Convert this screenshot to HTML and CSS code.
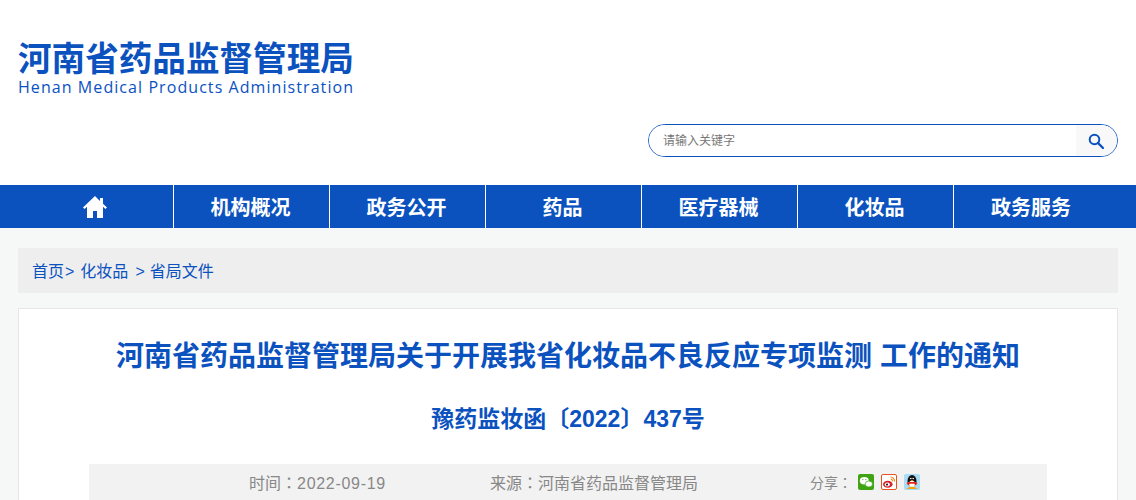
FILE: index.html
```html
<!DOCTYPE html>
<html lang="zh-CN">
  <head>
    <meta charset="UTF-8" />
    <title>河南省药品监督管理局</title>
    <link rel="stylesheet" href="styles.css">
  </head>
  <body>
    <header class="top">
      <div class="logo">
        <div class="logo-cn">河南省药品监督管理局</div>
        <div class="logo-en">Henan Medical Products Administration</div>
      </div>
      <form class="search">
        <input class="search-input" type="text" placeholder="请输入关键字" />
        <span class="search-btn">
          <svg width="16" height="16" viewBox="0 0 16 16">
            <circle cx="6.5" cy="6.5" r="4.8" fill="none" stroke="#0b52bf" stroke-width="2" />
            <path d="M10 10l5 5" stroke="#0b52bf" stroke-width="2.4" stroke-linecap="round" />
          </svg>
        </span>
      </form>
    </header>
    <nav class="nav">
      <ul class="nav-list">
        <li class="nav-item">
          <svg width="26" height="24" viewBox="0 0 26 24">
            <path d="M13 1L1 12.5l1.6 1.500L5 11.800V23h6v-7h4v7h6V11.800l2.400 2.200 1.600-1.500L21 8.700V3h-3v2.900z" fill="#fff" />
          </svg>
        </li>
        <li class="nav-item">机构概况</li>
        <li class="nav-item">政务公开</li>
        <li class="nav-item">药品</li>
        <li class="nav-item">医疗器械</li>
        <li class="nav-item">化妆品</li>
        <li class="nav-item">政务服务</li>
      </ul>
    </nav>
    <div class="crumb">
      <a>首页</a><span class="sep">&gt;</span><a>化妆品</a><span class="sep2">&gt;</span><a>省局文件</a>
    </div>
    <main class="card">
      <h1 class="title">河南省药品监督管理局关于开展我省化妆品不良反应专项监测 工作的通知</h1>
      <h2 class="doc-no">豫药监妆函〔2022〕437号</h2>
      <div class="meta">
        <span class="meta-time">时间<span class="colon" lang="zh-TW">：</span><span class="date">2022-09-19</span></span>
        <span class="meta-src">来源<span class="colon" lang="zh-TW">：</span>河南省药品监督管理局</span>
        <div class="share">
          <span class="share-label">分享<span class="colon" lang="zh-TW">：</span></span>
          <svg class="share-icon" width="16" height="16" viewBox="0 0 16 16">
            <rect width="16" height="16" rx="2" fill="#3fa312" />
            <ellipse cx="6.300" cy="6.700" rx="4.500" ry="3.700" fill="#fff" />
            <ellipse cx="10.800" cy="10" rx="3.700" ry="3" fill="#fff" stroke="#3fa312" stroke-width=".7" />
            <circle cx="4.800" cy="5.600" r=".6" fill="#3fa312" />
            <circle cx="7.800" cy="5.600" r=".6" fill="#3fa312" />
          </svg>
          <svg class="share-icon" width="16" height="16" viewBox="0 0 16 16">
            <rect x=".5" y=".5" width="15" height="15" rx="1.500" fill="#fff" stroke="#e8541e" />
            <ellipse cx="6.800" cy="10.200" rx="4.800" ry="3.500" fill="#d9232e" />
            <ellipse cx="6.300" cy="10.500" rx="2.600" ry="2" fill="#fff" />
            <circle cx="6" cy="10.600" r="1.100" fill="#222" />
            <path d="M9.500 3a4 4 0 0 1 4 4.500M9.800 5.200a2 2 0 0 1 1.800 2.200" fill="none" stroke="#f08a1d" stroke-width="1.200" />
          </svg>
          <svg class="share-icon" width="16" height="16" viewBox="0 0 16 16">
            <rect width="16" height="16" rx="2" fill="#a9dcf5" />
            <ellipse cx="8" cy="7" rx="4.500" ry="6" fill="#111" />
            <ellipse cx="8" cy="10" rx="3" ry="3.200" fill="#fff" />
            <circle cx="6.800" cy="4.500" r=".8" fill="#fff" />
            <circle cx="9.200" cy="4.500" r=".8" fill="#fff" />
            <path d="M6.500 6h3L8 7.200z" fill="#f0a11a" />
            <path d="M3.500 8h9l.8 2-2 1.200-1-1.500H5.700l-1 1.500-2-1.200z" fill="#e8281e" />
            <path d="M2.500 15l3-2.200h5l3 2.200z" fill="#f0a11a" />
          </svg>
        </div>
      </div>
    </main>
  </body>
</html>
```

FILE: styles.css
```css
* {
  box-sizing: border-box;
}
html,
body {
  margin: 0;
  padding: 0;
}
body {
  background: #f6f8f8;
  font-family: "Liberation Sans", "Noto Sans CJK SC", sans-serif;
  overflow: hidden;
}
ul {
  margin: 0;
  padding: 0;
  list-style: none;
}
.top {
  height: 185px;
  padding: 41px 18px 0;
  background: #fff;
}
.logo {
  color: #0b52bf;
}
.logo-cn {
  font-size: 33.6px;
  font-weight: 700;
  line-height: 38px;
  white-space: nowrap;
}
.logo-en {
  font-family: "Open Sans", sans-serif;
  font-size: 16px;
  line-height: 17px;
  letter-spacing: 1.07px;
  white-space: nowrap;
}
.search {
  display: flex;
  width: 470px;
  height: 33px;
  margin: 28px 0 0 630px;
  border: 1px solid #0b52bf;
  border-radius: 17px;
  overflow: hidden;
}
.search-input {
  flex: 1;
  min-width: 0;
  padding: 0 14px;
  border: none;
  outline: none;
  font-family: inherit;
  font-size: 12px;
}
.search-input::placeholder {
  color: #777;
}
.search-btn {
  display: flex;
  align-items: center;
  justify-content: center;
  width: 41px;
  padding-right: 2px;
  background: #f8f8f8;
}
.nav {
  height: 43px;
  padding: 0 18px;
  background: #0b52bf;
}
.nav-list {
  display: flex;
}
.nav-item {
  display: flex;
  align-items: center;
  justify-content: center;
  width: 156px;
  height: 43px;
  padding-right: 2px;
  border-right: 1px solid #fff;
  color: #fff;
  font-size: 20px;
  font-weight: 700;
}
.nav-item:last-child {
  border-right: none;
}
.crumb {
  display: flex;
  height: 45px;
  margin: 20px 18px 15px;
  padding-left: 14px;
  background: #eee;
  color: #0b52bf;
  font-size: 16px;
  line-height: 47px;
  white-space: nowrap;
}
.sep {
  margin: 0 6px 0 1px;
}
.sep2 {
  margin: 0 5px 0 7px;
}
.card {
  height: 192px;
  margin: 0 18px;
  padding: 0 70px;
  border: 1px solid #e6e6e6;
  border-bottom: none;
  background: #fff;
}
.title {
  margin: 0;
  padding-top: 28px;
  color: #0b52bf;
  font-size: 28px;
  font-weight: 700;
  line-height: 40px;
  text-align: center;
  white-space: nowrap;
}
.doc-no {
  margin: 26px 0 0;
  color: #0b52bf;
  font-size: 23px;
  font-weight: 700;
  line-height: 32px;
  text-align: center;
}
.meta {
  display: flex;
  align-items: center;
  height: 36px;
  margin-top: 29px;
  padding-left: 160px;
  background: #f2f2f2;
  color: #888;
  font-size: 16px;
}
.colon {
  font-family: "Noto Sans CJK TC", sans-serif;
}
.date {
  letter-spacing: 0.7px;
}
.meta-time {
  width: 241px;
}
.meta-src {
  width: 320px;
}
.share {
  display: flex;
  align-items: center;
}
.share-label {
  width: 48px;
  font-size: 14px;
}
.share-icon {
  margin-right: 7px;
}
```
